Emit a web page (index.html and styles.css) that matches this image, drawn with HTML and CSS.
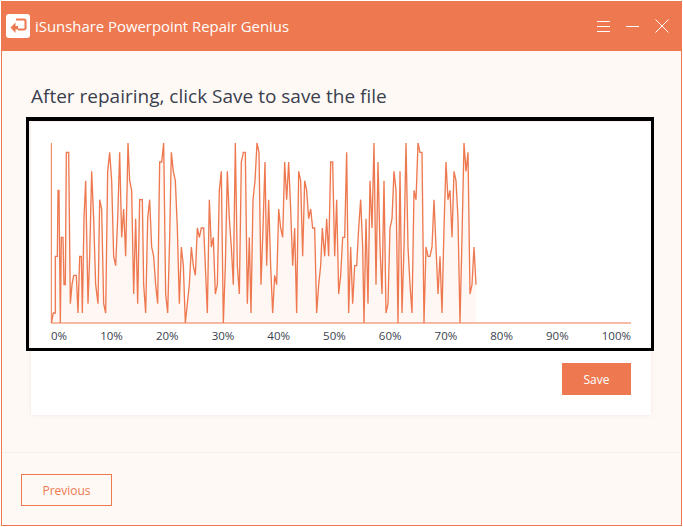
FILE: index.html
```html
<!DOCTYPE html>
<html lang="en">
<head>
<meta charset="utf-8">
<title>iSunshare Powerpoint Repair Genius</title>
<link rel="stylesheet" href="styles.css">
</head>
<body>
<div class="window">
  <header class="titlebar">
    <svg class="logo" viewBox="0 0 24 24" aria-hidden="true">
      <rect width="24" height="24" rx="3" fill="#fff"/>
      <path class="logo-frame" d="M10 5.500H18a1.500 1.500 0 0 1 1.500 1.500v7a1.500 1.500 0 0 1-1.500 1.500h-6"/>
      <path class="logo-arrow" d="M4.500 13.500 9.500 8.500V12h2.500v3.500H9.500v3.500Z"/>
    </svg>
    <div class="app-name">iSunshare Powerpoint Repair Genius</div>
    <div class="controls">
      <svg class="ctl" viewBox="0 0 14 14" aria-hidden="true"><path d="M0 2.500H13M0 7.500H13M0 12.500H13"/></svg>
      <svg class="ctl" viewBox="0 0 14 14" aria-hidden="true"><path d="M0 7.500H13"/></svg>
      <svg class="ctl" viewBox="0 0 14 14" aria-hidden="true"><path d="M.5 .5 13.500 13.500M13.500 .5 .5 13.500"/></svg>
    </div>
  </header>
  <main class="content">
    <h1 class="heading">After repairing, click Save to save the file</h1>
    <section class="card">
      <div class="chart">
        <svg class="plot" viewBox="0 0 1749 570" aria-hidden="true">
          <polygon class="area" points="10,555 16,525 22,525 22,355 28,355 30,157 33,157 37,555 40,298 45,298 48,440 52,440 55,43 62,43 67,497 72,440 77,412 85,412 90,525 95,355 100,355 103,525 108,242 113,128 120,497 125,355 131,100 137,242 143,440 150,497 155,185 161,213 167,497 173,525 179,100 185,43 191,128 197,355 203,383 209,242 215,43 221,298 227,213 233,355 240,15 245,128 251,157 257,468 263,242 269,497 275,185 283,185 287,440 293,525 299,242 305,185 311,327 317,355 323,440 329,497 335,72 341,72 347,15 353,468 359,525 365,298 370,43 376,100 382,128 388,270 394,497 400,327 406,383 412,555 418,497 424,440 430,327 436,383 442,412 448,270 454,298 460,270 467,270 472,383 478,525 484,185 490,327 496,298 502,468 508,440 514,157 520,100 526,555 532,383 538,100 544,242 550,327 556,440 562,15 568,383 574,468 580,72 586,43 592,43 598,497 604,298 609,525 615,185 621,128 627,15 633,43 639,440 645,270 651,72 656,383 662,185 668,383 674,525 680,412 686,440 692,213 698,270 704,298 710,72 716,185 722,72 728,213 734,383 740,270 746,525 752,100 758,128 764,355 770,128 776,157 782,242 788,213 794,270 800,270 806,525 812,440 818,383 823,270 830,355 836,242 842,355 848,72 854,72 860,355 866,185 872,468 878,412 884,298 890,298 896,43 902,525 908,327 914,497 920,383 926,383 932,270 938,185 944,327 948,555 954,242 960,497 966,128 972,270 978,15 984,440 990,72 996,327 1002,468 1008,128 1014,525 1020,497 1026,270 1032,242 1038,100 1044,157 1050,555 1056,100 1062,525 1068,327 1074,15 1080,327 1086,440 1092,525 1098,157 1104,185 1110,15 1116,43 1122,43 1128,555 1134,327 1140,355 1146,355 1152,327 1158,185 1164,327 1170,468 1176,355 1182,525 1188,270 1194,72 1200,185 1206,157 1212,298 1218,100 1224,128 1230,242 1236,555 1242,298 1248,15 1254,100 1260,43 1266,468 1272,440 1278,327 1284,440 1284,555"/>
          <polyline class="line" points="10,555 16,525 22,525 22,355 28,355 30,157 33,157 37,555 40,298 45,298 48,440 52,440 55,43 62,43 67,497 72,440 77,412 85,412 90,525 95,355 100,355 103,525 108,242 113,128 120,497 125,355 131,100 137,242 143,440 150,497 155,185 161,213 167,497 173,525 179,100 185,43 191,128 197,355 203,383 209,242 215,43 221,298 227,213 233,355 240,15 245,128 251,157 257,468 263,242 269,497 275,185 283,185 287,440 293,525 299,242 305,185 311,327 317,355 323,440 329,497 335,72 341,72 347,15 353,468 359,525 365,298 370,43 376,100 382,128 388,270 394,497 400,327 406,383 412,555 418,497 424,440 430,327 436,383 442,412 448,270 454,298 460,270 467,270 472,383 478,525 484,185 490,327 496,298 502,468 508,440 514,157 520,100 526,555 532,383 538,100 544,242 550,327 556,440 562,15 568,383 574,468 580,72 586,43 592,43 598,497 604,298 609,525 615,185 621,128 627,15 633,43 639,440 645,270 651,72 656,383 662,185 668,383 674,525 680,412 686,440 692,213 698,270 704,298 710,72 716,185 722,72 728,213 734,383 740,270 746,525 752,100 758,128 764,355 770,128 776,157 782,242 788,213 794,270 800,270 806,525 812,440 818,383 823,270 830,355 836,242 842,355 848,72 854,72 860,355 866,185 872,468 878,412 884,298 890,298 896,43 902,525 908,327 914,497 920,383 926,383 932,270 938,185 944,327 948,555 954,242 960,497 966,128 972,270 978,15 984,440 990,72 996,327 1002,468 1008,128 1014,525 1020,497 1026,270 1032,242 1038,100 1044,157 1050,555 1056,100 1062,525 1068,327 1074,15 1080,327 1086,440 1092,525 1098,157 1104,185 1110,15 1116,43 1122,43 1128,555 1134,327 1140,355 1146,355 1152,327 1158,185 1164,327 1170,468 1176,355 1182,525 1188,270 1194,72 1200,185 1206,157 1212,298 1218,100 1224,128 1230,242 1236,555 1242,298 1248,15 1254,100 1260,43 1266,468 1272,440 1278,327 1284,440"/>
          <polyline class="axis" points="10,15 10,555 1749,555"/>
        </svg>
        <div class="ticks">
          <span>0%</span><span>10%</span><span>20%</span><span>30%</span><span>40%</span><span>50%</span><span>60%</span><span>70%</span><span>80%</span><span>90%</span><span>100%</span>
        </div>
      </div>
      <div class="card-actions"><button class="btn btn-primary" type="button">Save</button></div>
    </section>
    <div class="highlight"></div>
  </main>
  <footer class="footer">
    <button class="btn btn-outline" type="button">Previous</button>
  </footer>
</div>
</body>
</html>
```
FILE: styles.css
```css
* { box-sizing: border-box; }
html, body { margin: 0; height: 100%; background: #fff; }
body { padding: 1px; font-family: "Open Sans", "Noto Sans", sans-serif; }
.window {
  width: 681px;
  height: 525px;
  display: flex;
  flex-direction: column;
  background: #fff9f6;
  border: 1px solid #ee7950;
  border-top: 0;
}
.titlebar {
  height: 50px;
  flex: none;
  margin: 0 -1px;
  padding: 0 13px 0 5px;
  display: flex;
  align-items: center;
  gap: 5px;
  background: #ee7950;
  color: #fff;
}
.logo { width: 24px; height: 24px; flex: none; }
.logo-frame { fill: none; stroke: #ee7950; stroke-width: 2; }
.logo-arrow { fill: #ee7950; }
.app-name { font-size: 14.9px; flex: 1; }
.controls { display: flex; gap: 15px; align-items: center; }
.ctl { width: 14px; height: 14px; }
.ctl path { fill: none; stroke: #fff; stroke-width: 1; }
.content {
  position: relative;
  flex: 1;
  padding: 31px 30px 0 29px;
  border-bottom: 1px solid #f6eeea;
}
.heading {
  margin: 0 0 11px;
  font-size: 19px;
  line-height: 29px;
  font-weight: 400;
  color: #3a3f4e;
}
.card {
  width: 620px;
  height: 293px;
  background: #fff;
  box-shadow: 0 0 4px rgba(190, 170, 160, .25);
  padding: 16px 20px 20px 20px;
  display: flex;
  flex-direction: column;
}
.chart { display: flex; flex-direction: column; }
.plot { display: block; width: 583px; height: 190px; margin-left: -3px; }
.area { fill: #fff7f3; stroke: none; }
.line { fill: none; stroke: #ee7950; stroke-width: 4; stroke-linejoin: miter; }
.axis { fill: none; stroke: #ee7950; stroke-width: 3; }
.ticks {
  display: flex;
  justify-content: space-between;
  width: 580px;
  font-size: 11.5px;
  line-height: 16px;
  color: #3a3f4e;
}
.card-actions { margin-top: auto; display: flex; justify-content: flex-end; }
.btn {
  font-family: inherit;
  font-size: 12px;
  padding: 0;
  border-radius: 0;
}
.btn-primary { width: 69px; height: 32px; background: #ee7950; color: #fff; border: 0; }
.highlight {
  position: absolute;
  left: 24px;
  top: 66px;
  width: 628px;
  height: 234px;
  border: 3px solid #000;
  border-top-width: 4px;
}
.footer {
  flex: none;
  height: 72px;
  padding: 21px 0 0 19px;
}
.btn-outline {
  width: 91px;
  height: 32px;
  background: transparent;
  color: #ee7950;
  border: 1px solid #ee7950;
}
```
